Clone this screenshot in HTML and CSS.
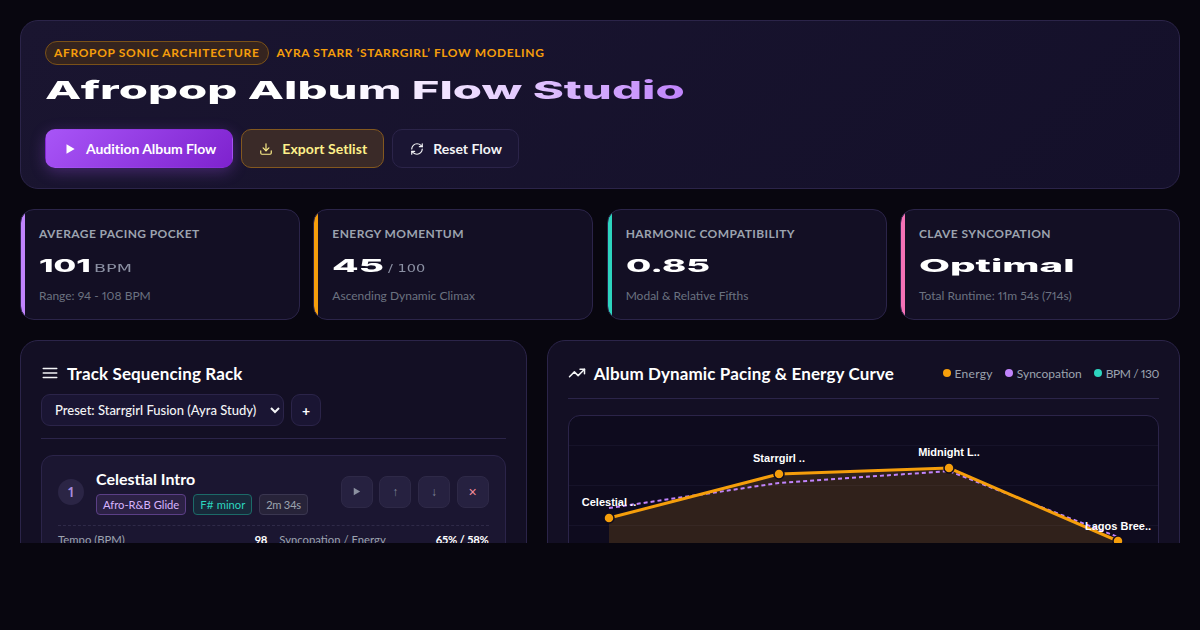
FILE: index.html
```html
<!DOCTYPE html>
<html lang="en">
<head>
<meta charset="UTF-8">
<meta name="viewport" content="width=device-width, initial-scale=1.0">
<title>Afropop Album Flow Studio</title>
<link rel="stylesheet" href="styles.css">
</head>
<body>

<div class="app">
    <!-- Header -->
    <header class="hero">
        <div class="eyebrow">
            <span class="badge">AFROPOP SONIC ARCHITECTURE</span>
            <span class="eyebrow-text">AYRA STARR ‘STARRGIRL’ FLOW MODELING</span>
        </div>
        <h1 class="hero-title"><span>Afropop Album Flow Studio</span></h1>
        <div class="hero-actions">
            <button class="btn btn-primary">
                <svg class="btn-icon" viewBox="0 0 24 24"><path d="M6 4l14 8-14 8z" fill="currentColor"/></svg>
                Audition Album Flow
            </button>
            <button class="btn btn-gold">
                <svg class="btn-icon" viewBox="0 0 24 24"><path d="M21 15v4a2 2 0 0 1-2 2H5a2 2 0 0 1-2-2v-4"/><path d="M7 10l5 5 5-5"/><path d="M12 15V3"/></svg>
                Export Setlist
            </button>
            <button class="btn btn-ghost">
                <svg class="btn-icon" viewBox="0 0 24 24"><path d="M3 12a9 9 0 0 1 9-9 9.75 9.75 0 0 1 6.74 2.74L21 8"/><path d="M21 3v5h-5"/><path d="M21 12a9 9 0 0 1-9 9 9.75 9.75 0 0 1-6.74-2.74L3 16"/><path d="M8 16H3v5"/></svg>
                Reset Flow
            </button>
        </div>
    </header>

    <!-- Stat cards -->
    <section class="stats">
        <div class="stat stat-purple">
            <div class="stat-label">AVERAGE PACING POCKET</div>
            <div class="stat-value"><span class="num num-bpm">101</span><small class="unit-bpm">BPM</small></div>
            <div class="stat-note">Range: 94 - 108 BPM</div>
        </div>
        <div class="stat stat-orange">
            <div class="stat-label">ENERGY MOMENTUM</div>
            <div class="stat-value"><span class="num num-energy">45</span><small class="unit-score">/ 100</small></div>
            <div class="stat-note">Ascending Dynamic Climax</div>
        </div>
        <div class="stat stat-teal">
            <div class="stat-label">HARMONIC COMPATIBILITY</div>
            <div class="stat-value"><span class="num num-ratio">0.85</span></div>
            <div class="stat-note">Modal &amp; Relative Fifths</div>
        </div>
        <div class="stat stat-pink">
            <div class="stat-label">CLAVE SYNCOPATION</div>
            <div class="stat-value"><span class="num num-word">Optimal</span></div>
            <div class="stat-note">Total Runtime: 11m 54s (714s)</div>
        </div>
    </section>

    <section class="workspace">
        <!-- Track rack -->
        <div class="panel">
            <h2 class="panel-title">
                <svg class="panel-icon" viewBox="0 0 24 24"><path d="M3 6h18"/><path d="M3 12h18"/><path d="M3 18h18"/></svg>
                Track Sequencing Rack
            </h2>
            <div class="preset-row">
                <select class="preset">
                    <option>Preset: Starrgirl Fusion (Ayra Study)</option>
                </select>
                <button class="add-btn">+</button>
            </div>
            <div class="track">
                <div class="track-top">
                    <div class="track-num">1</div>
                    <div class="track-info">
                        <div class="track-name">Celestial Intro</div>
                        <div class="chips">
                            <span class="chip chip-purple">Afro-R&amp;B Glide</span>
                            <span class="chip chip-teal">F# minor</span>
                            <span class="chip chip-grey">2m 34s</span>
                        </div>
                    </div>
                    <div class="track-btns">
                        <button class="mini"><svg viewBox="0 0 24 24" class="mini-play"><path d="M6 4l14 8-14 8z"/></svg></button>
                        <button class="mini">↑</button>
                        <button class="mini">↓</button>
                        <button class="mini mini-del">×</button>
                    </div>
                </div>
                <div class="track-meta">
                    <div class="meta-cell"><span>Tempo (BPM)</span><b>98</b></div>
                    <div class="meta-cell"><span>Syncopation / Energy</span><b>65% / 58%</b></div>
                </div>
            </div>
        </div>

        <!-- Energy chart -->
        <div class="panel">
            <div class="chart-head">
                <h2 class="panel-title">
                    <svg class="panel-icon" viewBox="0 0 24 24"><path d="M22 7l-8.500 8.500-5-5L2 17"/><path d="M16 7h6v6"/></svg>
                    Album Dynamic Pacing &amp; Energy Curve
                </h2>
                <div class="legend">
                    <span class="legend-item legend-energy"><i class="dot dot-orange"></i>Energy</span>
                    <span class="legend-item"><i class="dot dot-purple"></i>Syncopation</span>
                    <span class="legend-item legend-bpm"><i class="dot dot-teal"></i>BPM / 130</span>
                </div>
            </div>
            <div class="chart-box">
                <svg class="chart" width="589" height="300" viewBox="569 416 589 300">
                    <path class="grid-line" d="M569 445.500H1158M569 485.500H1158M569 525.500H1158"/>
                    <path class="area" d="M609 518L779 474L949 468L1118 541V716H609z"/>
                    <path class="sync-line" d="M609 508L779 483L949 471L1118 537"/>
                    <path class="energy-line" d="M609 518L779 474L949 468L1118 541"/>
                    <circle class="point" cx="609" cy="518" r="5"/>
                    <circle class="point" cx="779" cy="474" r="5"/>
                    <circle class="point" cx="949" cy="468" r="5"/>
                    <circle class="point" cx="1118" cy="541" r="5"/>
                    <text class="point-label" x="609" y="506">Celestial ..</text>
                    <text class="point-label" x="779" y="462">Starrgirl ..</text>
                    <text class="point-label" x="949" y="456">Midnight L..</text>
                    <text class="point-label" x="1118" y="530">Lagos Bree..</text>
                </svg>
            </div>
        </div>
    </section>
</div>

</body>
</html>
```

FILE: styles.css
```css
* {
    box-sizing: border-box;
}
body {
    margin: 0;
    height: 630px;
    overflow: hidden;
    background: #08060f;
    color: #fff;
    font-family: "Lato", "Open Sans", sans-serif;
    font-variant-numeric: proportional-nums;
}
.app {
    height: 543px;
    overflow: hidden;
    padding: 20px 20px 0;
    display: flex;
    flex-direction: column;
    gap: 20px;
}

/* Header */
.hero {
    flex: none;
    height: 169px;
    padding: 20px 24px;
    border: 1px solid #2b2449;
    border-radius: 18px;
    background: linear-gradient(135deg, #1a1530 0%, #14102a 100%);
}
.eyebrow {
    display: flex;
    align-items: center;
    gap: 8px;
    font-size: 12px;
    font-weight: 700;
    color: #f59e0b;
}
.badge {
    height: 24px;
    line-height: 21px;
    padding: 0 8px;
    border: 1px solid #7a5118;
    border-radius: 12px;
    background: #35241f;
    letter-spacing: 0.66px;
}
.eyebrow-text {
    padding-bottom: 2px;
    letter-spacing: 0.62px;
}
.hero-title {
    margin: 9px 0 23px;
    height: 32px;
    font-family: "Inter", sans-serif;
    font-size: 25px;
    line-height: 32px;
    font-weight: 800;
}
.hero-title span {
    display: inline-block;
    transform: scaleX(1.89);
    transform-origin: left;
    background: linear-gradient(90deg, #ffffff 0%, #ffffff 45%, #e9d5ff 70%, #c084fc 100%);
    -webkit-background-clip: text;
    background-clip: text;
    color: transparent;
}
.hero-actions {
    display: flex;
    gap: 8px;
}
.btn {
    display: flex;
    align-items: center;
    gap: 9px;
    height: 39px;
    padding: 0 16px 0 17px;
    border: 1px solid transparent;
    border-radius: 10px;
    font: 700 14px "Lato", sans-serif;
    font-variant-numeric: proportional-nums;
}
.btn-icon {
    width: 14px;
    height: 14px;
    fill: none;
    stroke: currentColor;
    stroke-width: 2;
    stroke-linecap: round;
    stroke-linejoin: round;
}
.btn-primary {
    color: #fff;
    letter-spacing: -0.05px;
    background: linear-gradient(135deg, #a855f7, #7e22ce);
    box-shadow: 0 4px 15px rgba(168, 85, 247, 0.3);
}
.btn-primary .btn-icon {
    stroke: none;
}
.btn-gold {
    color: #fef08a;
    border-color: #83581f;
    background: #3a2a28;
    letter-spacing: 0.08px;
}
.btn-ghost {
    color: #f3f4f6;
    border-color: #2b2449;
    background: #1a1533;
}

/* Stat cards */
.stats {
    flex: none;
    display: grid;
    grid-template-columns: repeat(4, 1fr);
    gap: 13.33px;
}
.stat {
    height: 111px;
    padding: 16px 18px;
    border: 1px solid #2b2449;
    border-radius: 14px;
    background: linear-gradient(var(--accent), var(--accent)) left / 4px 100% no-repeat #130f24;
}
.stat-purple { --accent: #c084fc; }
.stat-orange { --accent: #f59e0b; }
.stat-teal { --accent: #2dd4bf; }
.stat-pink { --accent: #f472b6; }
.stat-label {
    font-size: 12px;
    font-weight: 700;
    letter-spacing: 0.42px;
    line-height: 15px;
    color: #9ca3af;
}
.stat-value {
    display: flex;
    align-items: baseline;
    margin: 11px 0 8px;
    height: 28px;
    font-family: "Inter", sans-serif;
    font-size: 18px;
    line-height: 28px;
    font-weight: 800;
}
.num,
.stat-value small {
    display: inline-block;
    transform-origin: left;
}
.num-word { transform: scaleX(2.23); }
.num-ratio { transform: scaleX(2.03); }
.num-bpm { transform: scaleX(1.82); margin-right: 27px; }
.num-energy { transform: scaleX(2.15); margin-right: 32px; }
.stat-value small {
    font-family: "DejaVu Sans", sans-serif;
    font-size: 11px;
    font-weight: 400;
    color: #8b90a3;
}
.unit-bpm { transform: scaleX(1.6); }
.stat-value .unit-score {
    font-size: 10px;
    transform: scaleX(1.45);
}
.stat-note {
    font-size: 12px;
    line-height: 15px;
    color: #6b7280;
}

/* Panels */
.workspace {
    flex: none;
    display: grid;
    grid-template-columns: 4fr 5fr;
    gap: 20px;
}
.panel {
    height: 400px;
    padding: 20px;
    border: 1px solid #2b2449;
    border-radius: 18px;
    background: #130f24;
}
.panel-title {
    display: flex;
    align-items: center;
    gap: 8px;
    margin: 0;
    height: 26px;
    padding-bottom: 2px;
    font-size: 17px;
    font-weight: 700;
    letter-spacing: 0.12px;
}
.panel-icon {
    width: 18px;
    height: 18px;
    fill: none;
    stroke: #f3f4f6;
    stroke-width: 2;
    stroke-linecap: round;
    stroke-linejoin: round;
}
.preset-row {
    display: flex;
    gap: 7px;
    margin-top: 7px;
    padding-bottom: 12px;
    border-bottom: 1px solid #2b2449;
}
.preset {
    width: 243px;
    height: 32px;
    padding: 0 9px;
    border: 1px solid #2b2449;
    border-radius: 9px;
    background: #1a1533;
    color: #f3f4f6;
    font: 500 13px "Lato", sans-serif;
}
.add-btn {
    width: 30px;
    height: 32px;
    padding: 0;
    border: 1px solid #2b2449;
    border-radius: 9px;
    background: #1a1533;
    color: #fff;
    font: 700 14px "Lato", sans-serif;
}

/* Track card */
.track {
    margin-top: 16px;
    padding: 10px 16px;
    border: 1px solid #2b2449;
    border-radius: 12px;
    background: #1b1631;
}
.track-top {
    display: flex;
    align-items: center;
    padding-bottom: 10px;
    border-bottom: 1px dashed #2f2a48;
}
.track-num {
    flex: none;
    width: 26px;
    height: 26px;
    margin: 2px 12px 0 0;
    border-radius: 50%;
    background: #2b2545;
    color: #a78bda;
    font-size: 14px;
    font-weight: 700;
    line-height: 26px;
    text-align: center;
}
.track-info {
    flex: 1;
}
.track-name {
    padding-top: 1px;
    font-size: 16px;
    font-weight: 700;
    line-height: 24px;
}
.chips {
    display: flex;
    gap: 7px;
    margin-top: 3px;
}
.chip {
    height: 21px;
    padding: 0 6px;
    border: 1px solid;
    border-radius: 4px;
    font-size: 11.2px;
    line-height: 19px;
}
.chip-purple { color: #d8b4fe; border-color: #5b3f86; background: #2c2145; }
.chip-teal { color: #2dd4bf; border-color: #1c6a68; background: #18293a; }
.chip-grey { color: #9ca3af; border-color: #3a3650; background: #272339; letter-spacing: -0.3px; }
.track-btns {
    display: flex;
    gap: 6.67px;
    margin-top: 2px;
}
.mini {
    width: 32px;
    height: 32px;
    padding: 0;
    display: flex;
    align-items: center;
    justify-content: center;
    border: 1px solid #2e2947;
    border-radius: 8px;
    background: #262140;
    color: #7f8598;
    font: 400 12px "Liberation Sans", sans-serif;
}
.mini-play {
    width: 11px;
    height: 11px;
    fill: #8b90a0;
}
.mini-del {
    color: #f48a9a;
    font-size: 14px;
}
.track-meta {
    display: grid;
    grid-template-columns: 1fr 1fr;
    gap: 12px;
    padding-top: 6px;
    font-size: 11.3px;
    line-height: 16px;
    color: #9ca3af;
}
.meta-cell {
    display: flex;
    justify-content: space-between;
}
.meta-cell b {
    color: #fff;
    letter-spacing: -0.2px;
}

/* Chart */
.chart-head {
    display: flex;
    align-items: center;
    justify-content: space-between;
    padding-bottom: 11px;
    border-bottom: 1px solid #2b2449;
}
.legend {
    display: flex;
    gap: 12px;
    padding-bottom: 2px;
    font-size: 12px;
    color: #9ca3af;
}
.legend-item {
    display: flex;
    align-items: center;
    gap: 4px;
}
.legend-energy { letter-spacing: 0.3px; }
.legend-bpm { letter-spacing: -0.45px; }
.dot {
    width: 8px;
    height: 8px;
    border-radius: 50%;
}
.dot-orange { background: #f59e0b; }
.dot-purple { background: #c084fc; }
.dot-teal { background: #2dd4bf; }
.chart-box {
    height: 300px;
    margin-top: 16px;
    overflow: hidden;
    border: 1px solid #2b2449;
    border-radius: 12px;
    background: #0e0b1e;
}
.chart {
    display: block;
}
.grid-line {
    fill: none;
    stroke: #161329;
    stroke-width: 1;
}
.area {
    fill: rgba(245, 158, 11, 0.15);
}
.sync-line {
    fill: none;
    stroke: #c084fc;
    stroke-width: 2;
    stroke-dasharray: 4 3;
}
.energy-line {
    fill: none;
    stroke: #f59e0b;
    stroke-width: 3;
}
.point {
    fill: #f59e0b;
    stroke: #0e0b1e;
    stroke-width: 1.500;
}
.point-label {
    fill: #fff;
    font: 700 11px "Liberation Sans", sans-serif;
    text-anchor: middle;
}
```
